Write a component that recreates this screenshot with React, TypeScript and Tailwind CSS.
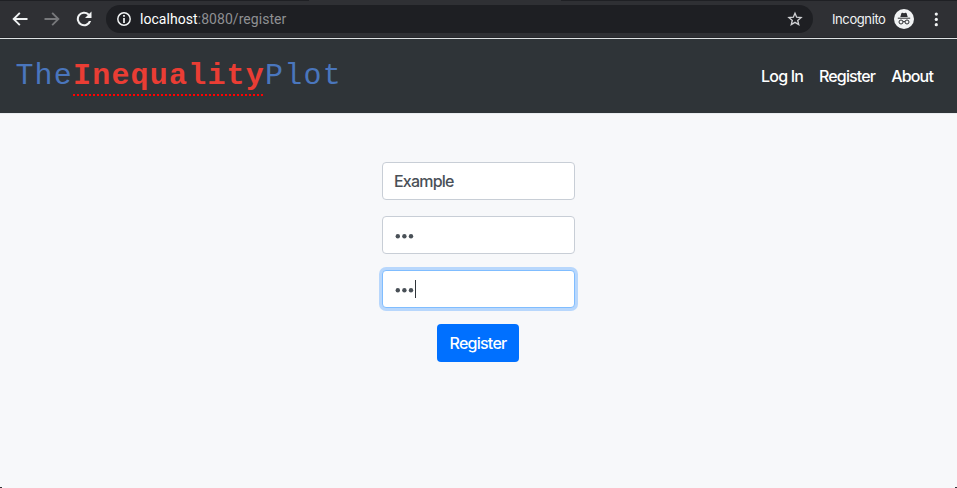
import type { ReactNode } from "react";

function ToolbarIcon({ children, className }: { children: ReactNode; className: string }) {
  return (
    <svg viewBox="0 0 24 24" fill="currentColor" className={`shrink-0 ${className}`} aria-hidden="true">
      {children}
    </svg>
  );
}

function BrowserBar() {
  return (
    <header className="h-[39px] border-b border-[#dfe2e4] bg-[#2f3034]">
      <div className="flex h-px bg-[#1f2024]">
        <div className="ml-[309px] h-px w-[252px] bg-[#2f3034]" />
      </div>
      <div className="flex h-[37px] items-center border-b border-[#25262a] pl-[10px]">
        <ToolbarIcon className="size-5 text-[#f1f3f4]">
          <path d="M21 10.8H7.2l5.4-5.4L11 3.8 2.8 12l8.2 8.2 1.6-1.6-5.4-5.4H21z" />
        </ToolbarIcon>
        <ToolbarIcon className="ml-3 size-5 text-[#77787b]">
          <path d="M3 10.8h13.8l-5.4-5.4L13 3.8l8.2 8.2-8.2 8.2-1.6-1.6 5.4-5.4H3z" />
        </ToolbarIcon>
        <ToolbarIcon className="ml-3 size-5 text-[#f1f3f4]">
          <path d="M18.3 5.7A8.8 8.8 0 1 0 20.6 14.5h-2.7a6.3 6.3 0 1 1-1.4-7L13.2 10.8H21V3z" />
        </ToolbarIcon>
        <div className="ml-3 flex h-7 w-[707px] items-center rounded-full bg-[#1e1f23] px-[10px]">
          <ToolbarIcon className="size-4 text-[#f1f3f4]">
            <circle cx="12" cy="12" r="9.3" fill="none" stroke="currentColor" strokeWidth="2.2" />
            <path d="M10.7 6h2.6v2.7h-2.6zM10.7 10.5h2.6V18h-2.6z" />
          </ToolbarIcon>
          <span className="ml-2 flex-1 font-[Roboto,sans-serif] text-[14px] leading-5 tracking-[0.05px] text-[#8f9093]">
            <span className="text-white">localhost</span>:8080/register
          </span>
          <ToolbarIcon className="size-4 text-[#d0d1d4]">
            <path
              d="M12 3.2l2.5 6.1 6.6.5-5 4.3 1.5 6.4-5.6-3.4-5.6 3.4 1.5-6.4-5-4.3 6.6-.5z"
              fill="none"
              stroke="currentColor"
              strokeWidth="2"
            />
          </ToolbarIcon>
        </div>
        <span className="ml-[19px] w-[62px] pt-px font-[Inter,sans-serif] text-[13px] tracking-[-0.4px] text-[#f1f3f4]">
          Incognito
        </span>
        <svg viewBox="0 0 20 20" className="size-5 shrink-0" aria-hidden="true">
          <circle cx="10" cy="10" r="10" fill="#f1f3f4" />
          <path d="M6.3 8.1L7.4 4.3q.3-.7 1-.5l1.6.4 1.6-.4q.7-.2 1 .5l1.1 3.8z" fill="#2f3034" />
          <path d="M3.8 9.2h12.4" stroke="#2f3034" strokeWidth="1" />
          <g fill="none" stroke="#2f3034" strokeWidth="1">
            <circle cx="7" cy="13" r="2" />
            <circle cx="13" cy="13" r="2" />
            <path d="M9 12.8q1-.6 2 0" />
          </g>
        </svg>
        <svg viewBox="0 0 4 16" className="ml-5 h-4 w-1 shrink-0" fill="#f1f3f4" aria-hidden="true">
          <circle cx="2.3" cy="3.1" r="1.6" />
          <circle cx="2.3" cy="8.4" r="1.6" />
          <circle cx="2.3" cy="13.7" r="1.6" />
        </svg>
      </div>
    </header>
  );
}

function PasswordDots({ focused = false }: { focused?: boolean }) {
  return (
    <div className="flex h-6 items-center pl-px">
      <svg viewBox="0 0 20 24" className="h-6 w-5" fill="#495057" role="img" aria-label="Password">
        <circle cx="2.8" cy="13.3" r="2.2" />
        <circle cx="9.4" cy="13.3" r="2.2" />
        <circle cx="16" cy="13.3" r="2.2" />
      </svg>
      {focused && <span className="-mt-px h-[18px] w-px bg-[#30353a]" />}
    </div>
  );
}

function Field({ children, focused = false }: { children: ReactNode; focused?: boolean }) {
  return (
    <div
      className={`flex h-[38px] w-[193px] items-center rounded border bg-white pl-[11px] text-[16px] font-[450] tracking-[-0.8px] text-[#495057] ${
        focused ? "border-[#80bdff] shadow-[0_0_0_3px_#b8d7fc]" : "border-[#c8ced6]"
      }`}
    >
      {children}
    </div>
  );
}

export default function App() {
  return (
    <div className="flex h-[488px] w-[957px] flex-col overflow-hidden bg-[#f7f8fa] font-[Inter,sans-serif]">
      <BrowserBar />
      <nav className="flex h-[74px] items-center justify-between bg-[#2f3438] pr-6 pl-[15.4px]">
        <div className="flex h-10 font-['Liberation_Mono',monospace] text-[30px] leading-10 tracking-[1.2px] text-[#4a76bd]">
          <span>The</span>
          <b className="h-10 bg-[repeating-linear-gradient(90deg,#ff0000_0_2px,transparent_2px_4px)] bg-[length:100%_2px] bg-bottom bg-no-repeat text-[#ea3d34]">
            Inequality
          </b>
          <span>Plot</span>
        </div>
        <div className="flex gap-4 text-[16px] font-[450] tracking-[-0.84px] text-white">
          <span>Log In</span>
          <span>Register</span>
          <span>About</span>
        </div>
      </nav>
      <main className="flex flex-1 flex-col items-center gap-4 border-t border-[#e9ecef] pt-12">
        <Field>Example</Field>
        <Field>
          <PasswordDots />
        </Field>
        <Field focused>
          <PasswordDots focused />
        </Field>
        <button className="mr-px h-[38px] w-[82px] rounded bg-[#0070ff] text-[16px] font-[450] tracking-[-0.75px] text-white">
          Register
        </button>
      </main>
      <div className="flex h-px justify-between">
        <span className="w-0.5 bg-[#303236]" />
        <span className="w-0.5 bg-[#303236]" />
      </div>
    </div>
  );
}
